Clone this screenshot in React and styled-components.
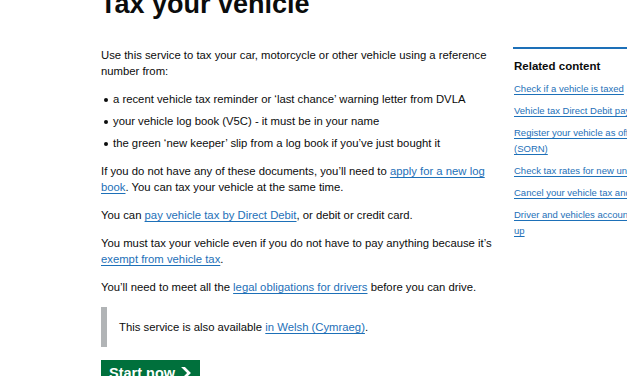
import React from "react";
import styled, { createGlobalStyle } from "styled-components";

const Global = createGlobalStyle`
  html, body { margin: 0; padding: 0; background: #ffffff; overflow: hidden; }
  body { font-family: "Liberation Sans", Arial, sans-serif; color: #0b0c0c; }
`;

const Page = styled.main`
  padding-left: 101px;
  margin-top: -11px;
  width: 760px;
`;

const Heading = styled.h1`
  margin: 0 0 28px -1px;
  font-size: 27px;
  line-height: 30px;
  font-weight: 700;
  color: #0b0c0c;
`;

const Columns = styled.div`
  display: grid;
  grid-template-columns: 400px 200px;
  column-gap: 13px;
  align-items: start;
`;

const MainCol = styled.div`
  display: flex;
  flex-direction: column;
`;

const Para = styled.p`
  margin: 0 0 12px;
  font-size: 11.3px;
  line-height: 16px;
`;

const Link = styled.a`
  color: #1d70b8;
  text-decoration: underline;
  text-decoration-thickness: 1px;
  text-underline-offset: 2px;
`;

const Bullets = styled.ul`
  margin: 0 0 12px;
  padding-left: 12px;
  list-style: none;
  font-size: 11.3px;
  line-height: 16px;
`;

const Bullet = styled.li`
  position: relative;
  margin-bottom: 6px;
  &:last-child { margin-bottom: 0; }
  &::before {
    content: "";
    position: absolute;
    left: -9px;
    top: 7px;
    width: 4px;
    height: 4px;
    border-radius: 50%;
    background: #0b0c0c;
  }
`;

const Inset = styled.div`
  border-left: 6px solid #b1b4b6;
  padding: 12px 0 12px 12px;
  margin: 0 0 13px;
  font-size: 11.3px;
  line-height: 16px;
`;

const StartButton = styled.a`
  display: inline-flex;
  align-items: center;
  align-self: flex-start;
  gap: 6px;
  padding: 6px 9px 8px 8px;
  background: #00703c;
  color: #ffffff;
  font-size: 14.5px;
  line-height: 1;
  font-weight: 700;
  text-decoration: none;
  box-shadow: 0 2px 0 #002d18;
`;

const Chevron = styled.svg`
  width: 10px;
  height: 12px;
  flex: none;
`;

const Aside = styled.aside`
  margin-top: 0;
  margin-left: -1px;
  border-top: 2px solid #1d70b8;
  padding: 9px 0 0 1px;
`;

const AsideTitle = styled.h2`
  margin: 0 0 7px;
  font-size: 11.5px;
  line-height: 16px;
  font-weight: 700;
`;

const RelatedList = styled.ul`
  margin: 0;
  padding: 0;
  list-style: none;
  font-size: 9.5px;
  line-height: 16px;
  white-space: nowrap;
`;

const RelatedItem = styled.li`
  margin-bottom: 6px;
`;

const related = [
  ["Check if a vehicle is taxed"],
  ["Vehicle tax Direct Debit payments"],
  ["Register your vehicle as off the road", "(SORN)"],
  ["Check tax rates for new unused vehicles"],
  ["Cancel your vehicle tax and get a refund"],
  ["Driver and vehicles account: sign", "up"],
];

export default function App() {
  return (
    <>
      <Global />
      <Page>
        <Heading>Tax your vehicle</Heading>
        <Columns>
          <MainCol>
            <Para>
              Use this service to tax your car, motorcycle or other vehicle using a reference number from:
            </Para>
            <Bullets>
              <Bullet>a recent vehicle tax reminder or ‘last chance’ warning letter from DVLA</Bullet>
              <Bullet>your vehicle log book (V5C) - it must be in your name</Bullet>
              <Bullet>the green ‘new keeper’ slip from a log book if you’ve just bought it</Bullet>
            </Bullets>
            <Para>
              If you do not have any of these documents, you’ll need to{" "}
              <Link href="#">apply for a new log book</Link>. You can tax your vehicle at the same time.
            </Para>
            <Para>
              You can <Link href="#">pay vehicle tax by Direct Debit</Link>, or debit or credit card.
            </Para>
            <Para>
              You must tax your vehicle even if you do not have to pay anything because it’s{" "}
              <Link href="#">exempt from vehicle tax</Link>.
            </Para>
            <Para>
              You’ll need to meet all the <Link href="#">legal obligations for drivers</Link> before you can drive.
            </Para>
            <Inset>
              This service is also available <Link href="#">in Welsh (Cymraeg)</Link>.
            </Inset>
            <StartButton href="#">
              Start now
              <Chevron viewBox="0 0 33 40" aria-hidden="true">
                <path fill="currentColor" d="M0 0h13l20 20-20 20H0l20-20z" />
              </Chevron>
            </StartButton>
          </MainCol>
          <Aside>
            <AsideTitle>Related content</AsideTitle>
            <RelatedList>
              {related.map((lines) => (
                <RelatedItem key={lines.join(" ")}>
                  <Link href="#">
                    {lines.map((l, i) => (
                      <React.Fragment key={l}>
                        {i > 0 && <br />}
                        {l}
                      </React.Fragment>
                    ))}
                  </Link>
                </RelatedItem>
              ))}
            </RelatedList>
          </Aside>
        </Columns>
      </Page>
    </>
  );
}
